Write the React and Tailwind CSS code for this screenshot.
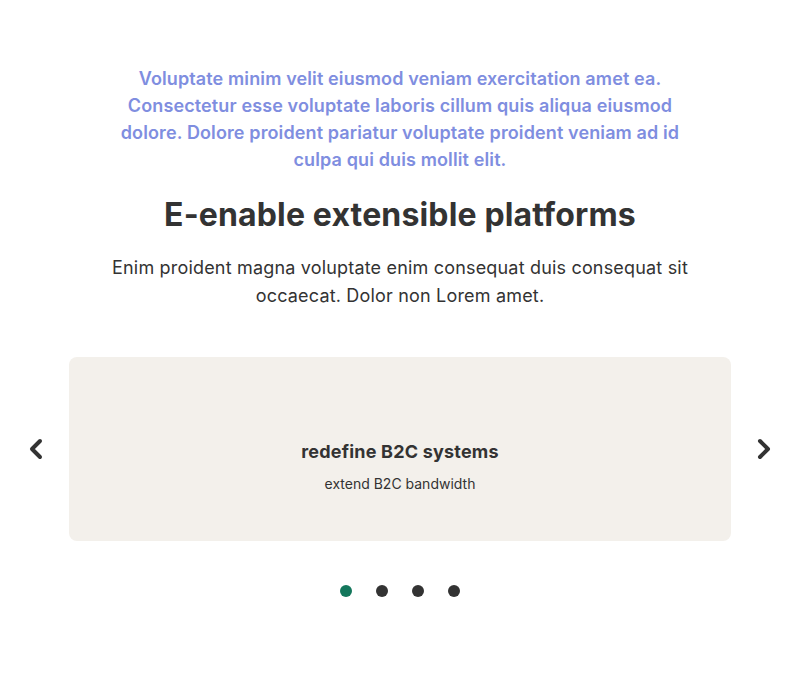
import React, { useState } from 'react';
import { ChevronLeft, ChevronRight } from 'lucide-react';

const slides = [
  { title: 'redefine B2C systems', text: 'extend B2C bandwidth' },
  { title: 'synergize web-enabled markets', text: 'scale viral niches' },
  { title: 'orchestrate robust users', text: 'deliver ubiquitous ROI' },
  { title: 'incubate scalable paradigms', text: 'target sticky e-tailers' },
];

export default function App() {
  const [index, setIndex] = useState(0);
  const slide = slides[index];

  return (
    <div className="min-h-screen bg-white font-['Inter',sans-serif] text-[#333333]">
      <div className="mx-auto flex max-w-[800px] flex-col items-center pt-[65px]">
        <p className="max-w-[580px] text-center text-[18px] font-semibold leading-[27px] tracking-[0.12px] text-[#7f8ee0]">
          Voluptate minim velit eiusmod veniam exercitation amet ea. Consectetur esse voluptate laboris cillum quis aliqua eiusmod dolore. Dolore proident pariatur voluptate proident veniam ad id culpa qui duis mollit elit.
        </p>
        <h2 className="mt-[18px] text-center text-[32px] font-bold leading-[48px] tracking-[0.15px]">
          E-enable extensible platforms
        </h2>
        <p className="mt-[15px] max-w-[600px] text-center text-[18px] leading-[28px] tracking-[0.18px]">
          Enim proident magna voluptate enim consequat duis consequat sit occaecat. Dolor non Lorem amet.
        </p>

        <div className="mt-[47px] flex w-full items-center justify-between px-[20px]">
          <button
            onClick={() => setIndex((index + slides.length - 1) % slides.length)}
            className="flex h-[32px] w-[32px] items-center justify-center"
          >
            <ChevronLeft className="h-[32px] w-[32px]" strokeWidth={3} />
          </button>
          <div className="flex h-[184px] w-[662px] flex-col items-center rounded-[8px] bg-[#f3f0eb] pt-[81px]">
            <h3 className="text-[18px] font-bold leading-[28px] tracking-[0.2px]">{slide.title}</h3>
            <p className="mt-[8px] text-[14px] leading-[20px]">{slide.text}</p>
          </div>
          <button
            onClick={() => setIndex((index + 1) % slides.length)}
            className="flex h-[32px] w-[32px] items-center justify-center"
          >
            <ChevronRight className="h-[32px] w-[32px]" strokeWidth={3} />
          </button>
        </div>

        <div className="mt-[44px] flex gap-[24px]">
          {slides.map((s, i) => (
            <button
              key={i}
              onClick={() => setIndex(i)}
              className={i === index ? 'h-[12px] w-[12px] rounded-full bg-[#14775c]' : 'h-[12px] w-[12px] rounded-full bg-[#333333]'}
            />
          ))}
        </div>
      </div>
    </div>
  );
}
